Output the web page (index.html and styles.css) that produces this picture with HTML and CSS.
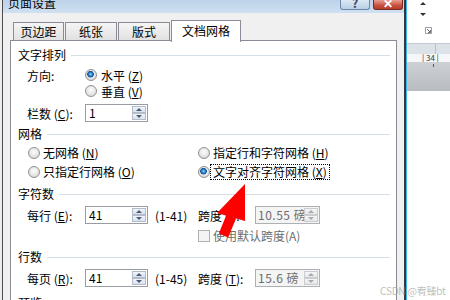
FILE: index.html
```html
<!DOCTYPE html>
<html>
<head>
	<meta charset="utf-8">
	<title>页面设置</title>
	<link rel="stylesheet" href="styles.css">
</head>
<body>
	<div class="screen">
		<div class="behind"></div>
		<div class="dialog">
			<div class="titlebar">
				<span class="title">页面设置</span>
				<div class="caption-buttons">
					<span class="caption-btn help"><span>?</span></span>
					<span class="caption-btn close"><span>✕</span></span>
				</div>
			</div>
			<div class="dialog-body">
				<div class="tabs">
					<div class="tab t1">页边距</div>
					<div class="tab t2">纸张</div>
					<div class="tab t3">版式</div>
					<div class="tab active">文档网格</div>
				</div>
				<div class="panel">
					<div class="group-title mt7"><span>文字排列</span><i></i></div>
					<div class="row mt5">
						<span class="label">方向:</span>
						<span class="radio checked"></span><span>水平 (<u>Z</u>)</span>
					</div>
					<div class="row">
						<span class="label"></span>
						<span class="radio"></span><span>垂直 (<u>V</u>)</span>
					</div>
					<div class="row tall mt5">
						<span class="label">栏数 (<u>C</u>):</span>
						<div class="spin">
							<span class="value">1</span>
							<span class="arrows"><b class="up"></b><b class="down"></b></span>
						</div>
					</div>

					<div class="group-title mt5"><span>网格</span><i></i></div>
					<div class="grid-row mt4">
						<div class="opt"><span class="radio"></span><span class="opt-text">无网格 (<u>N</u>)</span></div>
						<div class="opt"><span class="radio"></span><span class="opt-text">指定行和字符网格 (<u>H</u>)</span></div>
					</div>
					<div class="grid-row mt3">
						<div class="opt"><span class="radio"></span><span class="opt-text">只指定行网格 (<u>O</u>)</span></div>
						<div class="opt"><span class="radio checked"></span><span class="opt-text focus">文字对齐字符网格 (<u>X</u>)</span></div>
					</div>

					<div class="group-title mt7"><span>字符数</span><i></i></div>
					<div class="count-row mt5">
						<span>每行 (<u>E</u>):</span>
						<div class="spin">
							<span class="value">41</span>
							<span class="arrows"><b class="up"></b><b class="down"></b></span>
						</div>
						<span class="range">(1-41)</span>
						<span>跨度 (<u>I</u>):</span>
						<div class="spin wide disabled">
							<span class="value">10.55 磅</span>
							<span class="arrows"><b class="up"></b><b class="down"></b></span>
						</div>
					</div>
					<div class="count-row check mt3">
						<div class="check-opt"><span class="checkbox"></span><span>使用默认跨度(A)</span></div>
					</div>

					<div class="group-title mt7"><span>行数</span><i></i></div>
					<div class="count-row mt5">
						<span>每页 (<u>R</u>):</span>
						<div class="spin">
							<span class="value">41</span>
							<span class="arrows"><b class="up"></b><b class="down"></b></span>
						</div>
						<span class="range">(1-45)</span>
						<span>跨度 (<u>T</u>):</span>
						<div class="spin wide disabled">
							<span class="value">15.6 磅</span>
							<span class="arrows"><b class="up"></b><b class="down"></b></span>
						</div>
					</div>

					<div class="group-title mt9"><span>预览</span><i></i></div>
				</div>
			</div>
		</div>
		<div class="word">
			<div class="word-top">
				<span class="tri up"></span>
				<span class="tri down"></span>
				<svg class="launcher" width="7" height="7" viewBox="0 0 7 7">
					<path d="M0.5 0.5h6v6h-6z" fill="none" stroke="#9aa0a8"/>
					<path d="M2 2l3.5 3.5M5.5 3v2.5H3" fill="none" stroke="#6f767e"/>
				</svg>
			</div>
			<div class="word-band"><span></span></div>
			<div class="ruler">| 34 |</div>
			<div class="word-gray"><span class="tick"></span></div>
			<div class="word-page"></div>
		</div>
	</div>

	<svg class="arrow" width="450" height="300" viewBox="0 0 450 300">
		<polygon points="245,184 217,213 245,221" fill="#ff0000"/>
		<polygon points="236,218.5 226.6,214.6 218.8,233.6 228.2,237.5" fill="#ff0000"/>
	</svg>
	<div class="watermark">CSDN @宥臻bt</div>
</body>
</html>
```

FILE: styles.css
```css
body {
	margin: 0;
	width: 450px;
	height: 300px;
	overflow: hidden;
	position: relative;
	background-color: #fff;
	font-family: "Noto Sans CJK SC", "Liberation Sans", sans-serif;
	font-size: 12px;
	color: #000;
}

u {
	text-decoration: underline;
	text-underline-offset: 1px;
}

.screen {
	display: flex;
	height: 300px;
	overflow: hidden;
}

.behind {
	width: 2px;
	background-color: #ececec;
}

/* dialog window */
.dialog {
	width: 401px;
	display: flex;
	flex-direction: column;
	background-color: #f0f0f0;
	border-left: 1px solid #4b4b4b;
	border-right: 2px solid #2f3a44;
	overflow: hidden;
}

.titlebar {
	flex: none;
	height: 13px;
	display: flex;
	justify-content: space-between;
	align-items: flex-start;
	overflow: hidden;
	background: linear-gradient(#bdd3ea, #cfe0f1);
}

.title {
	font-size: 12px;
	line-height: 12px;
	margin: -3px 0 0 5px;
}

.caption-buttons {
	display: flex;
	gap: 3px;
	margin-right: 1px;
}

.caption-btn {
	width: 30px;
	height: 10px;
	box-sizing: border-box;
	display: flex;
	align-items: flex-end;
	justify-content: center;
	overflow: hidden;
	border: 1px solid #6d88a9;
	border-top: none;
	border-radius: 0 0 3px 3px;
	font-weight: bold;
	line-height: 12px;
}

.caption-btn.help {
	background: linear-gradient(#dde8f4, #b9cee6);
	color: #2d4262;
}

.caption-btn.close {
	background: linear-gradient(#e7a092, #c9513f 60%, #b63d2c);
	border-color: #7b2c22;
	color: #fff;
}

.dialog-body {
	flex: 1;
	min-height: 0;
	display: flex;
	flex-direction: column;
	padding: 7px 7px 0;
}

/* tabs */
.tabs {
	flex: none;
	display: flex;
	align-items: flex-end;
	gap: 1px;
	height: 20px;
	padding-left: 3px;
}

.tab {
	box-sizing: border-box;
	height: 18px;
	border: 1px solid #898c95;
	border-bottom: none;
	background: linear-gradient(#f5f5f5, #e1e1e1);
	text-align: center;
	line-height: 17px;
}

.tab.t1 { width: 51px; }
.tab.t2 { width: 52px; }
.tab.t3 { width: 52px; }

.tab.active {
	width: 70px;
	height: 22px;
	margin-bottom: -2px;
	line-height: 20px;
	background: #fff;
	position: relative;
	z-index: 1;
}

.panel {
	flex: 1;
	min-height: 0;
	overflow: hidden;
	background-color: #fff;
	border: 1px solid #898c95;
	border-bottom: none;
	padding: 0 6px 0 7px;
}

.mt3 { margin-top: 3px; }
.mt4 { margin-top: 4px; }
.mt5 { margin-top: 5px; }
.mt7 { margin-top: 7px; }
.mt9 { margin-top: 9px; }

.group-title {
	display: flex;
	align-items: center;
	gap: 5px;
	height: 14px;
	line-height: 14px;
}

.group-title i {
	flex: 1;
	height: 1px;
	background-color: #d5dfe5;
}

.row {
	display: flex;
	align-items: center;
	height: 16px;
	margin-left: 9px;
}

.row.tall {
	height: 18px;
}

.label {
	width: 58px;
	flex: none;
}

.radio {
	flex: none;
	width: 12px;
	height: 12px;
	box-sizing: border-box;
	border: 1px solid #8f9193;
	border-radius: 50%;
	margin-right: 4px;
	background: radial-gradient(circle at 50% 40%, #fdfdfd 0, #e6e6e6 55%, #cdcdcd 100%);
}

.radio.checked {
	background:
		radial-gradient(circle at 45% 42%, #a9dcff 0, #2e8fd8 1.5px, #164f91 3px, transparent 3.6px),
		radial-gradient(circle at 50% 40%, #fdfdfd 0, #e6e6e6 55%, #cdcdcd 100%);
}

/* spin boxes */
.spin {
	width: 63px;
	height: 18px;
	box-sizing: border-box;
	display: flex;
	border: 1px solid #999da3;
	background-color: #fff;
}

.spin.wide {
	width: 65px;
}

.spin .value {
	flex: 1;
	overflow: hidden;
	white-space: nowrap;
	padding-left: 3px;
	line-height: 16px;
}

.spin .arrows {
	width: 15px;
	display: flex;
	flex-direction: column;
	padding: 1px 1px 1px 0;
	box-sizing: border-box;
}

.spin .arrows b {
	flex: 1;
	display: flex;
	align-items: center;
	justify-content: center;
	border: 1px solid #b3bcc8;
	background: linear-gradient(#f3f6fa, #d8e1eb);
}

.spin .arrows b::after {
	content: "";
	border-left: 3px solid transparent;
	border-right: 3px solid transparent;
	border-bottom: 3px solid #4a5b7a;
}

.spin .arrows b.down::after {
	border-bottom: none;
	border-top: 3px solid #4a5b7a;
}

.spin.disabled {
	border-color: #adb1b5;
	background-color: #f4f4f4;
	color: #6d6d6d;
}

.spin.disabled .value {
	padding-left: 2px;
	letter-spacing: 0.5px;
}

.spin.disabled .arrows b {
	border-color: #c9cdd1;
	background: linear-gradient(#f6f6f6, #e6e6e6);
}

.spin.disabled .arrows b::after {
	border-bottom-color: #a7aaae;
}

.spin.disabled .arrows b.down::after {
	border-top-color: #a7aaae;
}

/* grid options */
.grid-row {
	display: flex;
	align-items: center;
	height: 16px;
	margin-left: 10px;
}

.opt {
	width: 170px;
	display: flex;
	align-items: center;
	flex: none;
}

.opt .radio {
	margin-right: 0;
}

.opt-text {
	padding: 0 2px;
	border: 1px solid transparent;
	line-height: 14px;
	white-space: nowrap;
}

.opt-text.focus {
	border: 1px dotted #000;
}

/* character / line counts */
.count-row {
	display: grid;
	grid-template-columns: 58px 63px 50px 57px 65px;
	align-items: center;
	height: 18px;
	margin-left: 9px;
	white-space: nowrap;
}

.count-row .range {
	padding-left: 7px;
}

.count-row.check {
	height: 16px;
}

.check-opt {
	grid-column: 4 / span 2;
	display: flex;
	align-items: center;
	color: #6d6d6d;
}

.checkbox {
	width: 12px;
	height: 12px;
	box-sizing: border-box;
	border: 1px solid #b1b1b1;
	background-color: #f4f4f4;
	margin-right: 3px;
	flex: none;
}

/* word window behind */
.word {
	flex: 1;
	display: flex;
	flex-direction: column;
	border-left: 1px solid #3cb4ea;
	background-color: #fff;
}

.word-top {
	flex: none;
	height: 43px;
	box-sizing: border-box;
	display: flex;
	flex-direction: column;
	align-items: flex-start;
	padding: 2px 0 0 13px;
}

.tri {
	width: 0;
	border-left: 3px solid transparent;
	border-right: 3px solid transparent;
}

.tri.up {
	border-bottom: 3px solid #333;
}

.tri.down {
	margin-top: 8px;
	border-top: 3px solid #333;
}

.launcher {
	margin: 11px 0 0 5px;
}

.word-band {
	flex: none;
	height: 10px;
	display: flex;
	background-color: #dde2e8;
	border-top: 1px solid #c5cbd3;
}

.word-band span {
	width: 28px;
	border-right: 1px solid #b9bfc7;
}

.ruler {
	flex: none;
	height: 8px;
	line-height: 8px;
	font-size: 8px;
	padding-left: 15px;
	color: #333;
	background-color: #f6f7f8;
	white-space: nowrap;
}

.word-gray {
	flex: none;
	height: 29px;
	background: linear-gradient(#cdd0d5, #b8bcc1);
}

.tick {
	display: block;
	width: 1px;
	height: 3px;
	margin-left: 26px;
	margin-top: 2px;
	background-color: #555;
}

.word-page {
	flex: 1;
	background-color: #fff;
}

/* overlays */
.arrow {
	position: absolute;
	left: 0;
	top: 0;
	pointer-events: none;
}

.watermark {
	position: absolute;
	left: 380px;
	top: 283px;
	font-size: 10px;
	letter-spacing: -0.2px;
	color: rgba(160, 160, 160, 0.7);
	white-space: nowrap;
}
```
